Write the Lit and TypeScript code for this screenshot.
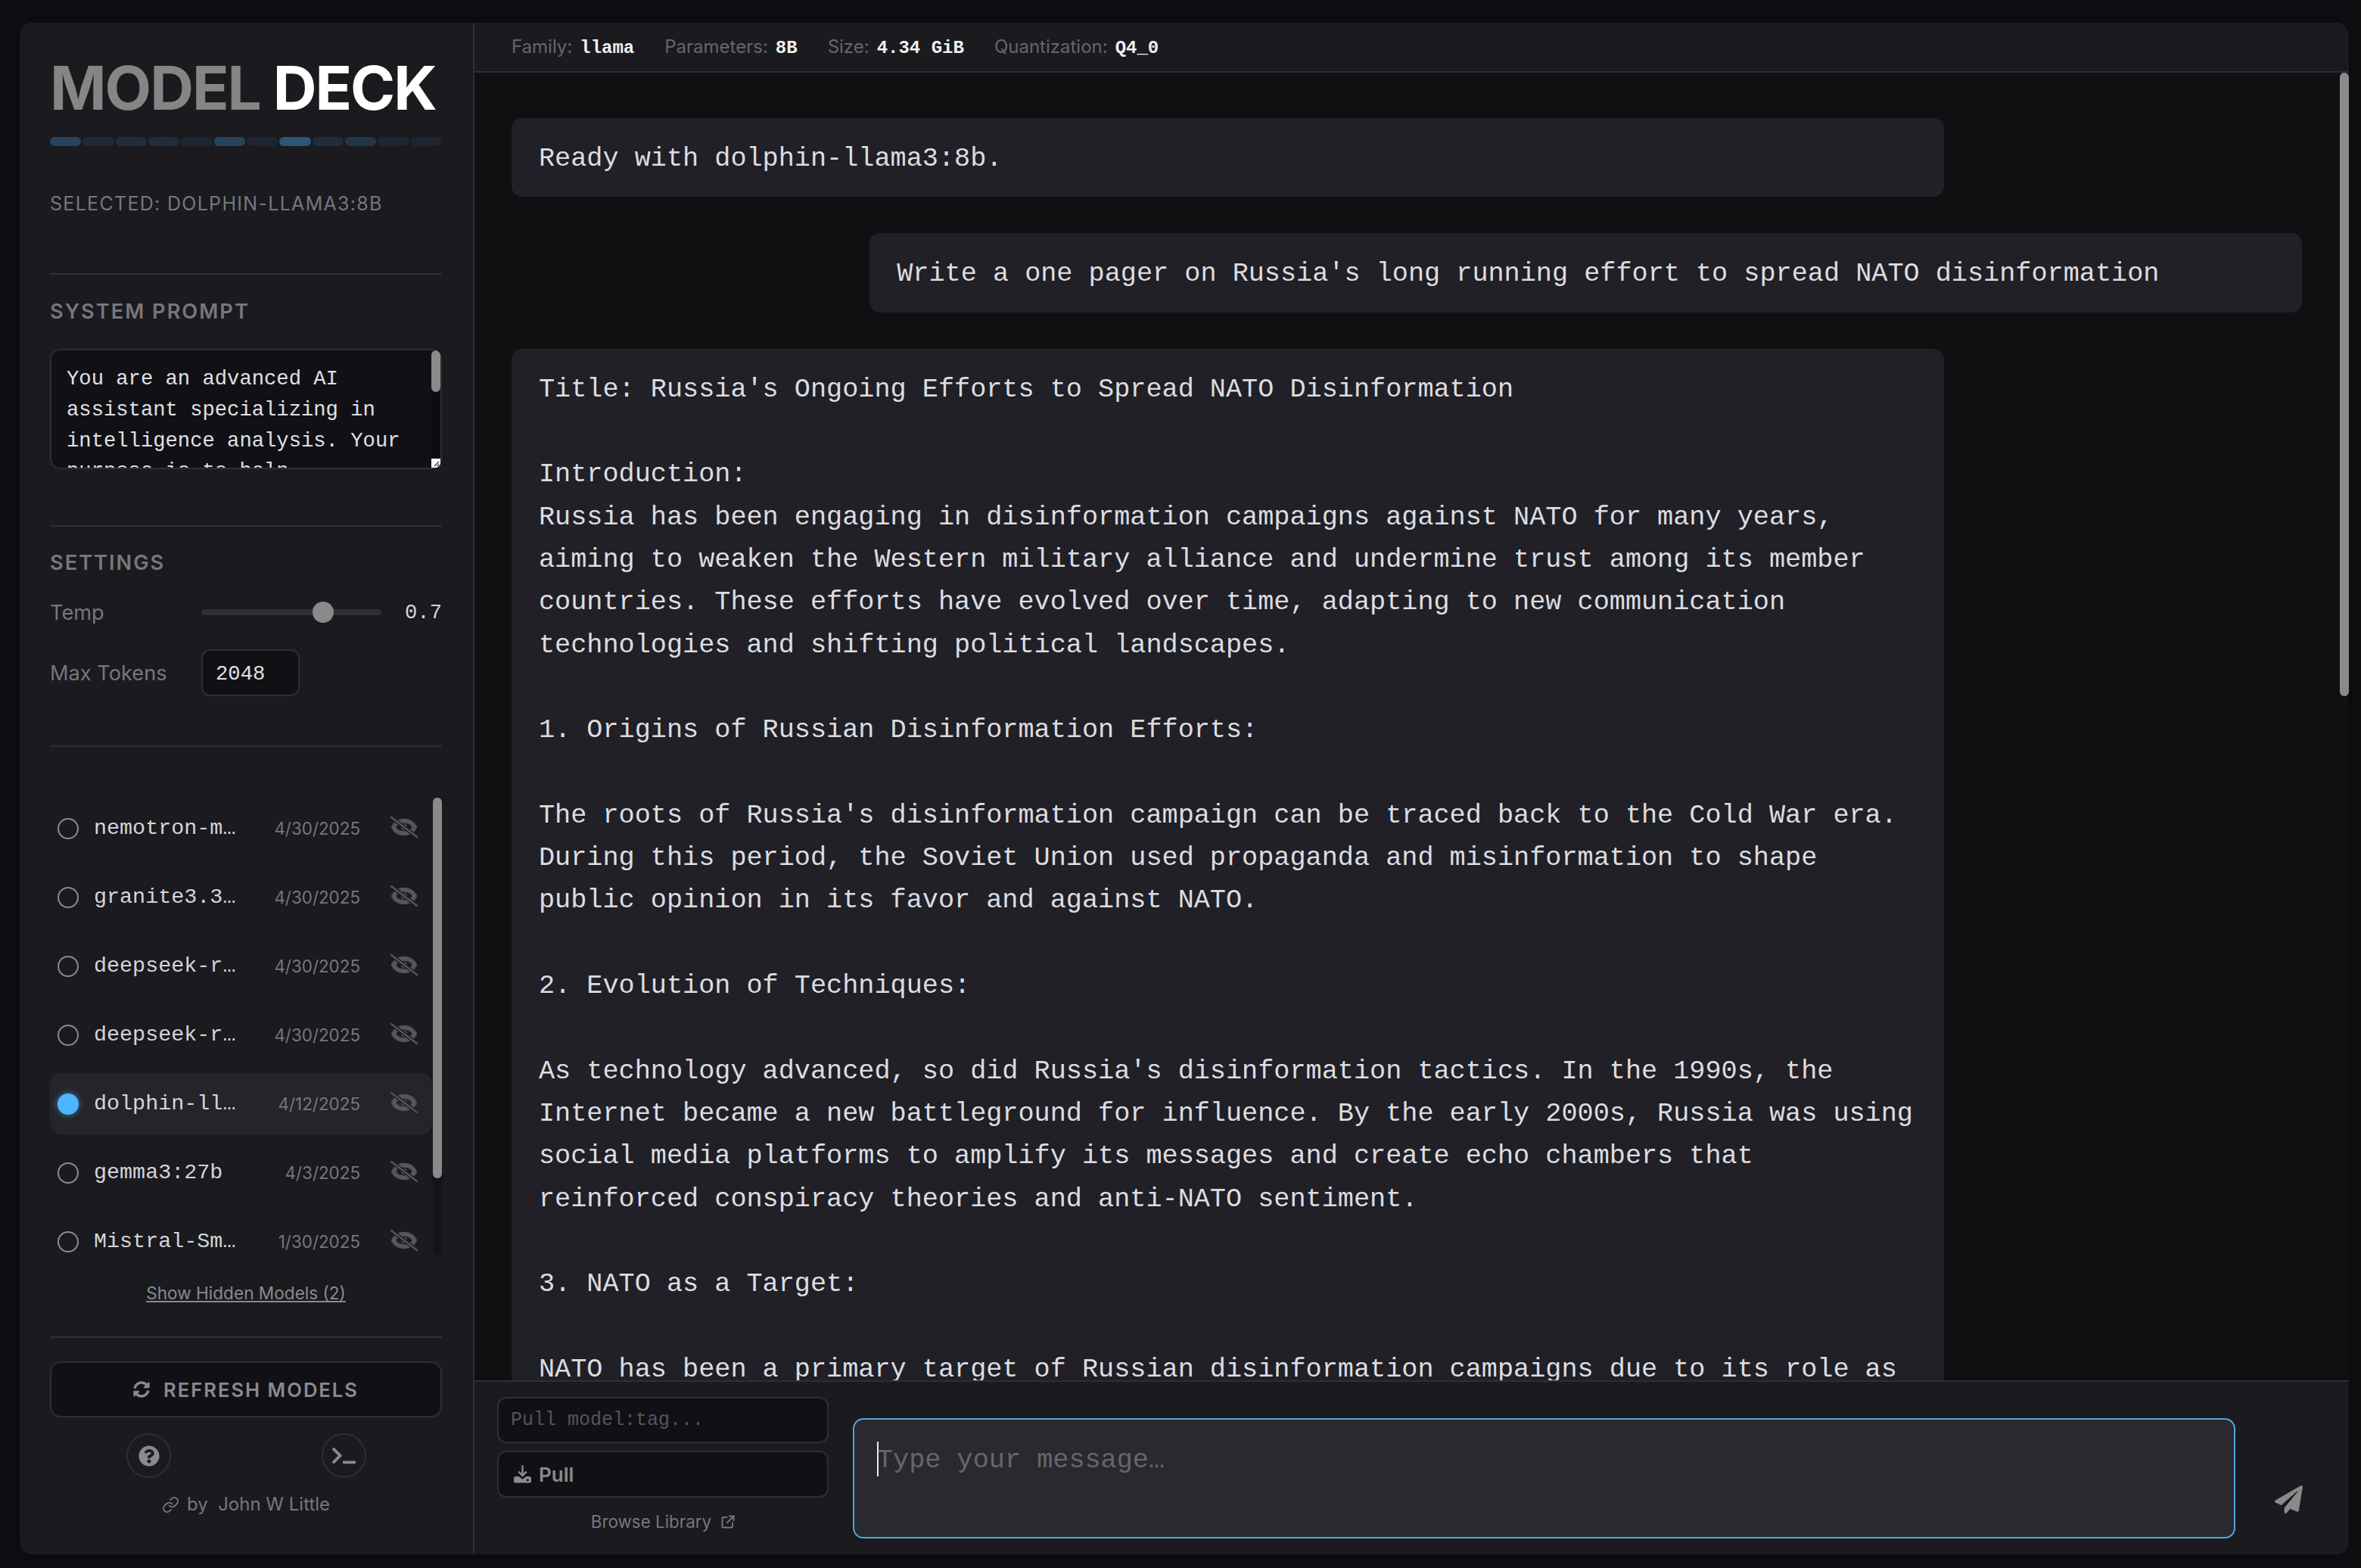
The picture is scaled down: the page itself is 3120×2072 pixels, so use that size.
import { LitElement, html, css } from 'lit';
import { customElement, property, state } from 'lit/decorators.js';

interface ModelEntry {
  name: string;
  date: string;
  selected?: boolean;
}

const MODELS: ModelEntry[] = [
  { name: 'nemotron-mini:latest', date: '4/30/2025' },
  { name: 'granite3.3:8b-instruct', date: '4/30/2025' },
  { name: 'deepseek-r1:8b-latest', date: '4/30/2025' },
  { name: 'deepseek-r1:14b-latest', date: '4/30/2025' },
  { name: 'dolphin-llama3:8b', date: '4/12/2025', selected: true },
  { name: 'gemma3:27b', date: '4/3/2025' },
  { name: 'Mistral-Small-3.1', date: '1/30/2025' },
  { name: 'llama3.2:latest', date: '1/12/2025' },
];

// blue strength of each segment in the strip under the title
const STRIP = [0.27, 0.1, 0.13, 0.13, 0.08, 0.27, 0.08, 0.38, 0.13, 0.18, 0.08, 0.08];

const SYSTEM_PROMPT =
  'You are an advanced AI assistant specializing in intelligence analysis. Your purpose is to help investigators evaluate open source reporting, identify influence operations, assess source credibility, and summarize findings clearly with careful attention to evidence.';

const USER_PROMPT = "Write a one pager on Russia's long running effort to spread NATO disinformation";

const ANSWER = `Title: Russia's Ongoing Efforts to Spread NATO Disinformation

Introduction:
Russia has been engaging in disinformation campaigns against NATO for many years, aiming to weaken the Western military alliance and undermine trust among its member countries. These efforts have evolved over time, adapting to new communication technologies and shifting political landscapes.

1. Origins of Russian Disinformation Efforts:

The roots of Russia's disinformation campaign can be traced back to the Cold War era. During this period, the Soviet Union used propaganda and misinformation to shape public opinion in its favor and against NATO.

2. Evolution of Techniques:

As technology advanced, so did Russia's disinformation tactics. In the 1990s, the Internet became a new battleground for influence. By the early 2000s, Russia was using social media platforms to amplify its messages and create echo chambers that reinforced conspiracy theories and anti-NATO sentiment.

3. NATO as a Target:

NATO has been a primary target of Russian disinformation campaigns due to its role as a collective defense alliance.`;

const eyeSlash = html`<svg class="eye" viewBox="0 0 36 28" aria-hidden="true">
  <path d="M4 14C9 3 27 3 32 14C27 25 9 25 4 14Z" fill="none" stroke="currentColor" stroke-width="6" stroke-linejoin="round"></path>
  <circle cx="18" cy="14" r="4" fill="currentColor"></circle>
  <path d="M1 1L35 27" stroke="#1a1a1f" stroke-width="5"></path>
  <path d="M1 1L35 27" stroke="currentColor" stroke-width="2.400" stroke-linecap="round"></path>
</svg>`;

const refreshIcon = html`<svg class="refresh-icon" viewBox="0 0 512 512" aria-hidden="true"><path fill="currentColor" d="M370.72 133.28C339.458 104.008 298.888 87.962 255.848 88c-77.458.068-144.328 53.178-162.791 126.85-1.344 5.363-6.122 9.15-11.651 9.15H24.103c-7.498 0-13.194-6.807-11.807-14.176C33.933 94.924 134.813 8 256 8c66.448 0 126.791 26.136 171.315 68.685L463.03 40.97C478.149 25.851 504 36.559 504 57.941V192c0 13.255-10.745 24-24 24H345.941c-21.382 0-32.09-25.851-16.971-40.971l41.75-41.749zM32 296h134.059c21.382 0 32.09 25.851 16.971 40.971l-41.75 41.75c31.262 29.273 71.835 45.319 114.876 45.28 77.418-.07 144.315-53.144 162.787-126.849 1.344-5.363 6.122-9.15 11.651-9.15h57.304c7.498 0 13.194 6.807 11.807 14.176C478.067 417.076 377.187 504 256 504c-66.448 0-126.791-26.136-171.315-68.685L48.97 471.03C33.851 486.149 8 475.441 8 454.059V320c0-13.255 10.745-24 24-24z"></path></svg>`;

const helpIcon = html`<svg class="help-icon" viewBox="0 0 512 512" aria-hidden="true"><path fill="currentColor" d="M504 256c0 136.997-111.043 248-248 248S8 392.997 8 256C8 119.083 119.043 8 256 8s248 111.083 248 248zM262.655 90c-54.497 0-89.255 22.957-116.549 63.758-3.536 5.286-2.353 12.415 2.715 16.258l34.699 26.31c5.205 3.947 12.621 3.008 16.665-2.122 17.864-22.658 30.113-35.797 57.303-35.797 20.429 0 45.698 13.148 45.698 32.958 0 14.976-12.363 22.667-32.534 33.976C247.128 238.528 216 254.941 216 296v4c0 6.627 5.373 12 12 12h56c6.627 0 12-5.373 12-12v-1.333c0-28.462 83.186-29.647 83.186-106.667 0-58.002-60.165-102-116.531-102zM256 338c-25.365 0-46 20.635-46 46 0 25.364 20.635 46 46 46s46-20.636 46-46c0-25.365-20.635-46-46-46z"></path></svg>`;

const terminalIcon = html`<svg class="terminal-icon" viewBox="0 0 640 512" aria-hidden="true"><path fill="currentColor" d="M257.981 272.971L63.638 467.314c-9.373 9.373-24.569 9.373-33.941 0L7.029 444.647c-9.357-9.357-9.375-24.522-.04-33.901L161.011 256 6.99 101.255c-9.335-9.379-9.317-24.544.04-33.901l22.667-22.667c9.373-9.373 24.569-9.373 33.941 0L257.981 239.03c9.373 9.372 9.373 24.568 0 33.941zM640 456v-32c0-13.255-10.745-24-24-24H312c-13.255 0-24 10.745-24 24v32c0 13.255 10.745 24 24 24h304c13.255 0 24-10.745 24-24z"></path></svg>`;

const linkIcon = html`<svg class="link-icon" viewBox="0 0 24 24" aria-hidden="true" fill="none" stroke="currentColor" stroke-width="2" stroke-linecap="round" stroke-linejoin="round"><path d="M10 13a5 5 0 0 0 7.54.54l3-3a5 5 0 0 0-7.07-7.07l-1.72 1.71"></path><path d="M14 11a5 5 0 0 0-7.54-.54l-3 3a5 5 0 0 0 7.07 7.07l1.71-1.71"></path></svg>`;

const downloadIcon = html`<svg class="download-icon" viewBox="0 0 24 24" aria-hidden="true">
  <path d="M12 0v14M6.500 8.500L12 14l5.500-5.500" fill="none" stroke="currentColor" stroke-width="2.600"></path>
  <path fill="currentColor" d="M3 15h4l5 4 5-4h4a3 3 0 0 1 3 3v3a3 3 0 0 1-3 3H3a3 3 0 0 1-3-3v-3a3 3 0 0 1 3-3z"></path>
  <circle cx="19" cy="20" r="1.600" fill="#111115"></circle>
</svg>`;

const externalIcon = html`<svg class="external-icon" viewBox="0 0 18 18" aria-hidden="true" fill="none" stroke="currentColor" stroke-width="2" stroke-linecap="round" stroke-linejoin="round"><path d="M7.500 3H3a1.500 1.500 0 0 0-1.500 1.500V15A1.500 1.500 0 0 0 3 16.500h10.500A1.500 1.500 0 0 0 15 15v-4.500"></path><path d="M11 1.500h5.500V7"></path><path d="M16.500 1.500L8 10"></path></svg>`;

const sendIcon = html`<svg class="send-icon" viewBox="0 0 512 512" aria-hidden="true"><path fill="currentColor" d="M476 3.200L12.500 270.600c-18.100 10.400-15.800 35.600 2.200 43.200L121 358.400l287.300-253.200c5.500-4.900 13.300 2.600 8.600 8.300L176 407v80.500c0 23.600 28.500 32.900 42.500 15.800L282 426l124.600 52.200c14.200 6 30.400-2.900 33-18.200l72-432C515 7.800 493.300-6.800 476 3.200z"></path></svg>`;

@customElement('model-row')
export class ModelRow extends LitElement {
  @property({ type: Object })
  model: ModelEntry = { name: '', date: '' };

  static styles = css`
    :host {
      display: block;
    }

    .row {
      display: flex;
      align-items: center;
      height: 81px;
      padding: 0 19px 0 10px;
      box-sizing: border-box;
      border-radius: 14px;
    }

    .row.selected {
      background: #242429;
    }

    .radio {
      flex: none;
      width: 28px;
      height: 28px;
      box-sizing: border-box;
      border: 2px solid #8a8a8e;
      border-radius: 50%;
    }

    .selected .radio {
      background: #4db5ff;
      border-color: #4db5ff;
      box-shadow: 0 0 8px rgba(77, 181, 255, 0.6);
    }

    .name {
      flex: none;
      width: 190px;
      margin-left: 20px;
      font: 28.400px 'Liberation Mono', monospace;
      color: #d4d4d8;
      white-space: nowrap;
      overflow: hidden;
      text-overflow: ellipsis;
    }

    .date {
      flex: 1;
      text-align: right;
      font: 22.4px Inter, sans-serif;
      color: #77777b;
    }

    .eye {
      flex: none;
      width: 36px;
      height: 28px;
      margin-left: 40px;
      margin-top: -4px;
      color: #55555a;
    }
  `;

  render() {
    return html`
      <div class="row ${this.model.selected ? 'selected' : ''}">
        <span class="radio"></span>
        <span class="name">${this.model.name}</span>
        <span class="date">${this.model.date}</span>
        ${eyeSlash}
      </div>
    `;
  }
}

@customElement('side-bar')
export class SideBar extends LitElement {
  static styles = css`
    :host {
      display: block;
      flex: none;
      width: 601px;
      box-sizing: border-box;
      padding: 0 41px 0 40px;
      border-right: 2px solid #2e2e33;
      font-family: Inter, sans-serif;
    }

    .title {
      margin: 46px 0 0;
      font-size: 80px;
      line-height: 80px;
      font-weight: 700;
      letter-spacing: -2px;
      color: #858585;
      white-space: nowrap;
    }

    .title b {
      color: #fff;
      font-weight: 700;
    }

    .strip {
      display: flex;
      gap: 2px;
      margin-top: 25px;
    }

    .strip span {
      flex: 1;
      height: 12px;
      border-radius: 6px;
      background: #4db5ff;
    }

    .selected-name {
      margin-top: 61px;
      font-size: 25px;
      line-height: 30px;
      letter-spacing: 1.300px;
      color: #77777b;
      white-space: nowrap;
    }

    .rule {
      height: 2px;
      background: #2e2e33;
    }

    .rule.prompt-rule {
      margin-top: 77px;
    }

    h2 {
      margin: 0;
      font-size: 27.200px;
      line-height: 32px;
      font-weight: 600;
      letter-spacing: 2px;
      color: #77777b;
    }

    .prompt-title {
      margin-top: 33px;
    }

    .prompt-box {
      position: relative;
      height: 159px;
      margin-top: 33px;
      border-radius: 14px;
      overflow: hidden;
    }

    textarea {
      display: block;
      width: 100%;
      height: 100%;
      box-sizing: border-box;
      padding: 18px 34px 18px 20px;
      background: #111115;
      border: 2px solid #2e2e33;
      border-radius: 14px;
      outline: none;
      resize: none;
      color: #e0e0e4;
      font: 27.200px/40.800px 'Liberation Mono', monospace;
    }

    .prompt-track {
      position: absolute;
      top: 2px;
      right: 2px;
      bottom: 2px;
      width: 12px;
      background: #0c0c10;
    }

    .prompt-thumb {
      height: 55px;
      border-radius: 6px;
      background: #8a8a8a;
    }

    .prompt-grip {
      position: absolute;
      right: 0;
      bottom: 0;
      display: block;
      width: 12px;
      height: 12px;
      background: #fff;
    }

    .settings-rule {
      margin-top: 74px;
    }

    .settings-title {
      margin-top: 32px;
    }

    .setting {
      display: flex;
      align-items: center;
      font-size: 27.200px;
      color: #77777b;
    }

    .setting label {
      flex: none;
      width: 200px;
    }

    .temp {
      height: 40px;
      margin-top: 29px;
    }

    input[type='range'] {
      flex: none;
      width: 238px;
      height: 28px;
      margin: 0;
      background: transparent;
      -webkit-appearance: none;
      appearance: none;
    }

    input[type='range']::-webkit-slider-runnable-track {
      height: 8px;
      border-radius: 4px;
      background: #2f2f34;
    }

    input[type='range']::-webkit-slider-thumb {
      -webkit-appearance: none;
      width: 28px;
      height: 28px;
      margin-top: -10px;
      border-radius: 50%;
      background: #8a8a8a;
    }

    .value {
      flex: 1;
      text-align: right;
      font: 27.200px 'Liberation Mono', monospace;
      color: #d4d4d8;
    }

    .tokens {
      margin-top: 29px;
    }

    .tokens input {
      width: 130px;
      height: 62px;
      box-sizing: border-box;
      padding: 2px 17px 0;
      background: #111115;
      border: 2px solid #2e2e33;
      border-radius: 12px;
      outline: none;
      color: #e0e0e4;
      font: 27.200px 'Liberation Mono', monospace;
    }

    .list-rule {
      margin-top: 65px;
    }

    .list-box {
      position: relative;
      height: 605px;
      margin-top: 67px;
    }

    .list {
      height: 100%;
      padding-right: 13px;
      overflow: hidden;
    }

    .list-track {
      position: absolute;
      top: 0;
      right: 0;
      bottom: 0;
      width: 12px;
      border-radius: 6px;
      background: #141418;
    }

    .list-thumb {
      height: 503px;
      border-radius: 6px;
      background: #8a8a8a;
    }

    .rows {
      display: flex;
      flex-direction: column;
      gap: 10px;
    }

    .hidden-link {
      display: block;
      margin-top: 36px;
      text-align: center;
      font-size: 22.600px;
      line-height: 28px;
      color: #8a8a8e;
      text-decoration: underline;
    }

    .footer-rule {
      margin-top: 43px;
    }

    .refresh {
      display: flex;
      align-items: center;
      justify-content: center;
      gap: 18px;
      width: 100%;
      height: 74px;
      margin-top: 31px;
      box-sizing: border-box;
      background: #111115;
      border: 2px solid #2e2e33;
      border-radius: 14px;
      color: #8a8a8e;
      font: 600 25.600px Inter, sans-serif;
      letter-spacing: 2px;
    }

    .refresh-icon {
      width: 22px;
      height: 22px;
    }

    .tools {
      display: flex;
      gap: 199px;
      padding-left: 101px;
      margin-top: 21px;
    }

    .tool {
      display: flex;
      align-items: center;
      justify-content: center;
      width: 59px;
      height: 59px;
      box-sizing: border-box;
      border: 2px solid #2e2e33;
      border-radius: 50%;
      color: #8a8a8e;
    }

    .help-icon {
      width: 28px;
      height: 28px;
    }

    .terminal-icon {
      width: 31px;
      height: 25px;
    }

    .credit {
      display: flex;
      align-items: center;
      justify-content: center;
      gap: 10px;
      margin-top: 20px;
      font-size: 24px;
      line-height: 30px;
      color: #77777b;
    }

    .link-icon {
      width: 23px;
      height: 23px;
    }
  `;

  render() {
    return html`
      <h1 class="title">MODEL <b>DECK</b></h1>
      <div class="strip">
        ${STRIP.map(o => html`<span style="opacity:${o}"></span>`)}
      </div>
      <div class="selected-name">SELECTED: DOLPHIN-LLAMA3:8B</div>

      <div class="rule prompt-rule"></div>
      <h2 class="prompt-title">SYSTEM PROMPT</h2>
      <div class="prompt-box">
        <textarea .value=${SYSTEM_PROMPT}></textarea>
        <div class="prompt-track">
          <div class="prompt-thumb"></div>
          <svg class="prompt-grip" viewBox="0 0 12 12" aria-hidden="true">
            <path d="M4 10L10 4M7.500 10L10 7.500" stroke="#333" stroke-width="1.200"></path>
          </svg>
        </div>
      </div>

      <div class="rule settings-rule"></div>
      <h2 class="settings-title">SETTINGS</h2>
      <div class="setting temp">
        <label>Temp</label>
        <input type="range" min="0" max="1" step="0.1" .value=${'0.7'} />
        <span class="value">0.7</span>
      </div>
      <div class="setting tokens">
        <label>Max Tokens</label>
        <input type="text" .value=${'2048'} />
      </div>

      <div class="rule list-rule"></div>
      <div class="list-box">
        <div class="list">
          <div class="rows">
            ${MODELS.map(m => html`<model-row .model=${m}></model-row>`)}
          </div>
        </div>
        <div class="list-track"><div class="list-thumb"></div></div>
      </div>
      <a class="hidden-link">Show Hidden Models (2)</a>

      <div class="rule footer-rule"></div>
      <button class="refresh">${refreshIcon}<span>REFRESH MODELS</span></button>
      <div class="tools">
        <span class="tool">${helpIcon}</span>
        <span class="tool">${terminalIcon}</span>
      </div>
      <div class="credit">${linkIcon}<span>by&nbsp; John W Little</span></div>
    `;
  }
}

@customElement('chat-pane')
export class ChatPane extends LitElement {
  @state()
  private _draft = '';

  static styles = css`
    :host {
      display: flex;
      flex-direction: column;
      flex: 1;
      min-width: 0;
      font-family: Inter, sans-serif;
    }

    .meta {
      flex: none;
      display: flex;
      align-items: center;
      gap: 40px;
      height: 66px;
      box-sizing: border-box;
      padding: 0 49px;
      border-bottom: 2px solid #2e2e33;
      font-size: 24px;
      color: #66666a;
    }

    .meta b {
      margin-left: 10px;
      font: 700 24px 'Liberation Mono', monospace;
      color: #f0f0f0;
    }

    .messages {
      flex: 1;
      position: relative;
      min-height: 0;
      overflow: hidden;
      background: #101013;
    }

    .stack {
      display: flex;
      flex-direction: column;
      gap: 48px;
      padding: 60px 62px 0 49px;
    }

    .bubble {
      width: 80%;
      box-sizing: border-box;
      padding: 26px 36px 22px;
      border-radius: 14px;
      background: #202026;
      color: #dcdce0;
      font: 35.200px/56.320px 'Liberation Mono', monospace;
      white-space: pre-wrap;
    }

    .bubble.user {
      align-self: flex-end;
    }

    .scroll-thumb {
      position: absolute;
      top: 0;
      right: 0;
      width: 12px;
      height: 824px;
      border-radius: 6px;
      background: #8a8a8a;
    }

    .composer {
      flex: none;
      display: flex;
      height: 230px;
      box-sizing: border-box;
      padding-left: 30px;
      border-top: 2px solid #2e2e33;
    }

    .pull {
      flex: none;
      display: flex;
      flex-direction: column;
      width: 438px;
      padding-top: 20px;
    }

    .pull input {
      height: 61px;
      box-sizing: border-box;
      padding: 0 16px;
      background: #111115;
      border: 2px solid #2e2e33;
      border-radius: 12px;
      outline: none;
      font: 25px 'Liberation Mono', monospace;
      color: #e0e0e4;
    }

    .pull input::placeholder {
      color: #55555a;
    }

    .pull button {
      display: flex;
      align-items: center;
      gap: 10px;
      height: 62px;
      margin-top: 10px;
      padding: 0 20px;
      box-sizing: border-box;
      background: #111115;
      border: 2px solid #2e2e33;
      border-radius: 12px;
      color: #8a8a8e;
      font: 600 26px Inter, sans-serif;
    }

    .download-icon {
      width: 23px;
      height: 24px;
    }

    .browse {
      display: flex;
      align-items: center;
      justify-content: center;
      gap: 13px;
      margin-top: 17px;
      font-size: 22.400px;
      line-height: 30px;
      color: #77777b;
    }

    .external-icon {
      width: 18px;
      height: 18px;
    }

    .box {
      position: relative;
      flex: none;
      width: 1827px;
      height: 159px;
      margin: 48px 0 0 32px;
    }

    .box textarea {
      display: block;
      width: 100%;
      height: 100%;
      box-sizing: border-box;
      padding: 26px 30px 22px;
      background: #29292e;
      border: 2px solid #4ea9e0;
      border-radius: 14px;
      outline: none;
      resize: none;
      color: #e0e0e4;
      font: 35.200px/56px 'Liberation Mono', monospace;
    }

    .box textarea::placeholder {
      color: #66666a;
      opacity: 1;
    }

    .caret {
      position: absolute;
      left: 32px;
      top: 31px;
      width: 2px;
      height: 46px;
      background: #e8e8e8;
    }

    .send {
      flex: none;
      align-self: flex-end;
      margin: 0 0 54px 52px;
      padding: 0;
      background: none;
      border: none;
      color: #8a8a8a;
    }

    .send-icon {
      display: block;
      width: 37px;
      height: 37px;
    }
  `;

  render() {
    return html`
      <div class="meta">
        <span>Family:<b>llama</b></span>
        <span>Parameters:<b>8B</b></span>
        <span>Size:<b>4.34 GiB</b></span>
        <span>Quantization:<b>Q4_0</b></span>
      </div>
      <div class="messages">
        <div class="stack">
          <div class="bubble system">Ready with dolphin-llama3:8b.</div>
          <div class="bubble user">${USER_PROMPT}</div>
          <div class="bubble answer">${ANSWER}</div>
        </div>
        <div class="scroll-thumb"></div>
      </div>
      <div class="composer">
        <div class="pull">
          <input placeholder="Pull model:tag..." />
          <button>${downloadIcon}<span>Pull</span></button>
          <a class="browse"><span>Browse Library</span>${externalIcon}</a>
        </div>
        <div class="box">
          <textarea placeholder="Type your message…" .value=${this._draft}></textarea>
          <span class="caret"></span>
        </div>
        <button class="send">${sendIcon}</button>
      </div>
    `;
  }
}

@customElement('app-root')
export class AppRoot extends LitElement {
  static styles = css`
    :host {
      display: block;
      width: 100vw;
      height: 100vh;
      box-sizing: border-box;
      padding: 30px 16px 18px 26px;
      background: #0e0e13;
      overflow: hidden;
    }

    .frame {
      display: flex;
      height: 100%;
      border-radius: 16px;
      overflow: hidden;
      background: #1a1a1f;
      box-shadow: 0 0 20px rgba(0, 0, 0, 0.35);
    }
  `;

  render() {
    return html`
      <div class="frame">
        <side-bar></side-bar>
        <chat-pane></chat-pane>
      </div>
    `;
  }
}

declare global {
  interface HTMLElementTagNameMap {
    'app-root': AppRoot;
    'side-bar': SideBar;
    'chat-pane': ChatPane;
    'model-row': ModelRow;
  }
}
